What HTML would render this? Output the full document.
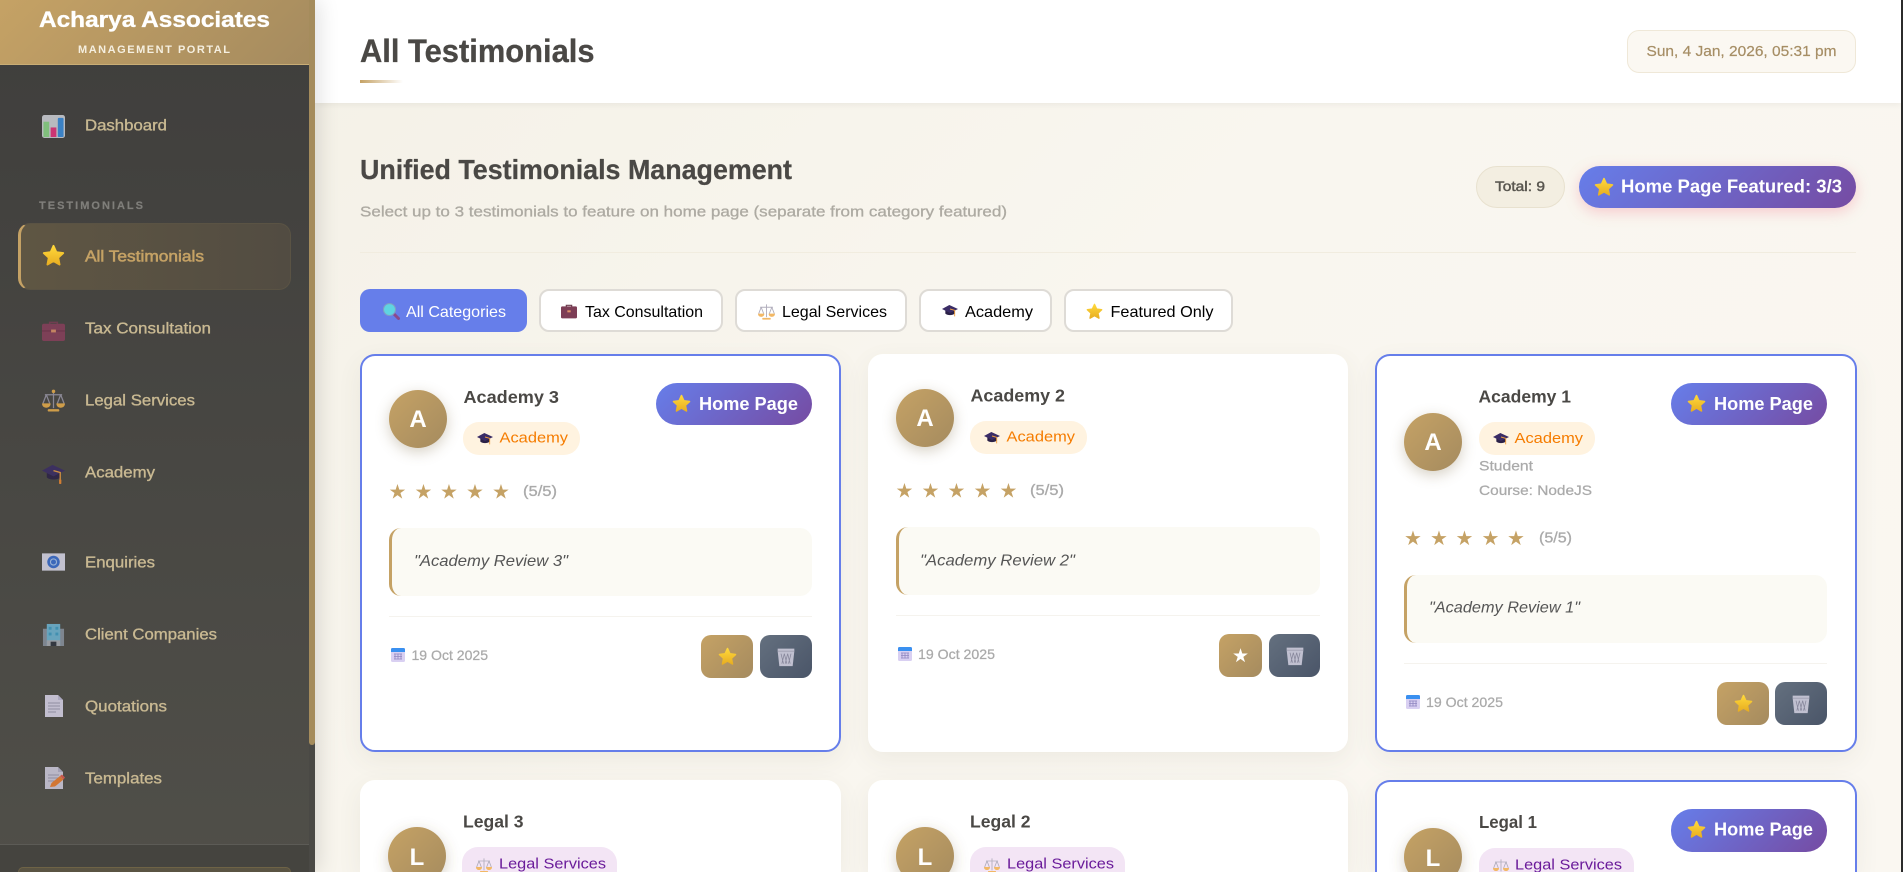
<!DOCTYPE html>
<html lang="en">
<head>
<meta charset="utf-8">
<title>All Testimonials</title>
<style>
html,body{margin:0;padding:0;width:1903px;height:872px;overflow:hidden;background:#f7f4ec;font-family:"Liberation Sans",sans-serif}
#root{position:relative;left:0;top:0;width:1903px;height:872px;overflow:hidden}
#root div{position:absolute;box-sizing:border-box}
#main{left:315px;top:0;width:1586px;height:872px;background:linear-gradient(135deg,#f4f1e7,#f9f6ef 45%,#faf7f1)}
#edge{left:1901px;top:0;width:2px;height:872px;background:#2b2b2b}
#aside{left:0;top:0;width:315px;height:872px;background:linear-gradient(180deg,#3f3e3c,#504f49);box-shadow:4px 0 20px rgba(0,0,0,.12)}
#track{left:309px;top:745px;width:6px;height:127px;background:#4a4945}
#thumb{left:309px;top:0;width:6px;height:745px;background:#a58c5c;border-radius:0 0 3px 3px}
#brand{left:0;top:0;width:309px;height:65px;background:linear-gradient(135deg,#c5a265,#a58b5f);border-bottom:1px solid #c9ad75}
#active{left:18px;top:223px;width:273px;height:67px;border-radius:12px;background:linear-gradient(90deg,#5f5643,#524c42);border:1px solid #5a5344;border-left:3px solid #c5a265}
#foot{left:0;top:844px;width:309px;height:28px;background:#45443f;border-top:1px solid #5c5b56}
#footbox{left:18px;top:867px;width:273px;height:5px;background:#5a5443;border:1px solid #6e6346;border-bottom:0;border-radius:12px 12px 0 0}
#top{left:315px;top:0;width:1586px;height:103px;background:#fff;box-shadow:0 2px 6px rgba(0,0,0,.05)}
#ul{left:360px;top:80px;width:43px;height:3px;background:linear-gradient(90deg,#c5a265,rgba(197,162,101,0))}
#date{left:1627px;top:30px;width:229px;height:43px;background:#fbf8f2;border:1px solid #efe8d8;border-radius:12px}
#rule{left:360px;top:252px;width:1496px;height:1px;background:#f1ecdf}
#total{left:1476px;top:166px;width:89px;height:42px;background:#f3eee1;border:1px solid #e8e1cf;border-radius:21px}
#feat{left:1579px;top:166px;width:277px;height:42px;background:linear-gradient(135deg,#667eea,#764ba2);border-radius:21px;box-shadow:0 4px 14px rgba(240,120,140,.35)}
#root .tab{top:289px;height:43px;background:#fff;border:2px solid #dedbd6;border-radius:10px}
.card{background:#fff;border-radius:15px;box-shadow:0 8px 25px rgba(90,80,50,.07)}
.low{height:92px;border-radius:15px 15px 0 0}
#root .hp{border:2px solid #667eea}
#root .hp.low{border-bottom:0}
.av{width:58px;height:58px;border-radius:50%;background:linear-gradient(135deg,#c5a265,#a58b5f);box-shadow:0 4px 14px rgba(120,100,60,.3)}
.pa{height:33px;background:#fff3e0;border-radius:16px}
.pl{height:25px;background:#f3e5f5;border-radius:16px 16px 0 0}
.hb{width:156px;height:42px;border-radius:21px;background:linear-gradient(135deg,#667eea,#764ba2)}
.q{height:68px;width:423px;background:#fbfaf4;border-left:3px solid #c5a265;border-radius:12px}
.ln{height:1px;width:423px;background:#f5f3ee}
.bg{height:43px;border-radius:10px;background:linear-gradient(135deg,#c5a265,#a58b5f)}
.bs{height:43px;width:52px;border-radius:10px;background:linear-gradient(135deg,#64707f,#4a5568)}
#ov{position:absolute;left:0;top:0}
text{font-family:"Liberation Sans",sans-serif}
.b{font-weight:700}
.nav{font-size:15.8px;fill:#c9b992;stroke:#c9b992;stroke-width:.35px}
.nm{font-size:17.6px;font-weight:700;fill:#4a4845}
.ca{font-size:14.8px;fill:#f57c00}
.cl{font-size:14.8px;fill:#6a1b9a}
.hpt{font-size:18px;font-weight:700;fill:#fff}
.st{font-family:"DejaVu Sans",sans-serif;font-size:20px;fill:#c5a265}
.rt{font-size:14.4px;fill:#aaa;stroke:#aaa;stroke-width:.3px}
.qt{font-size:16px;font-style:italic;fill:#555}
.dt{font-size:13.6px;fill:#aaa;stroke:#aaa;stroke-width:.25px}
.let{font-size:24px;font-weight:700;fill:#fff;text-anchor:middle}
.tb{font-size:16px;fill:#000}
.dim{opacity:.82}
</style>
</head>
<body>
<div id="root">
<div id="main"></div>
<div id="top"></div>
<div id="ul"></div>
<div id="date"></div>
<div id="rule"></div>
<div id="total"></div>
<div id="feat"></div>

<div class="tab" style="left:360px;width:167px;background:#667eea;border:0"></div>
<div class="tab" style="left:539px;width:184px"></div>
<div class="tab" style="left:735px;width:172px"></div>
<div class="tab" style="left:919px;width:133px"></div>
<div class="tab" style="left:1064px;width:169px"></div>

<!-- row 1 -->
<div class="card hp" style="left:360px;top:354px;width:481px;height:398px"></div>
<div class="av" style="left:389px;top:390px"></div>
<div class="pa" style="left:463px;top:422px;width:117px"></div>
<div class="hb" style="left:656px;top:383px"></div>
<div class="q" style="left:389px;top:528px"></div>
<div class="ln" style="left:389px;top:616px"></div>
<div class="bg" style="left:701px;top:635px;width:52px"></div>
<div class="bs" style="left:760px;top:635px"></div>

<div class="card" style="left:868px;top:354px;width:480px;height:398px"></div>
<div class="av" style="left:896px;top:389px"></div>
<div class="pa" style="left:970px;top:421px;width:117px"></div>
<div class="q" style="left:896px;top:527px;width:424px"></div>
<div class="ln" style="left:896px;top:615px;width:424px"></div>
<div class="bg" style="left:1219px;top:634px;width:43px"></div>
<div class="bs" style="left:1269px;top:634px;width:51px"></div>

<div class="card hp" style="left:1375px;top:354px;width:482px;height:398px"></div>
<div class="av" style="left:1404px;top:413px"></div>
<div class="pa" style="left:1479px;top:422px;width:116px"></div>
<div class="hb" style="left:1671px;top:383px"></div>
<div class="q" style="left:1404px;top:575px"></div>
<div class="ln" style="left:1404px;top:663px"></div>
<div class="bg" style="left:1717px;top:682px;width:52px"></div>
<div class="bs" style="left:1775px;top:682px"></div>

<!-- row 2 (cut off by the viewport) -->
<div class="card low" style="left:360px;top:780px;width:481px"></div>
<div class="pl" style="left:462px;top:847px;width:155px"></div>

<div class="card low" style="left:868px;top:780px;width:480px"></div>
<div class="pl" style="left:970px;top:847px;width:155px"></div>

<div class="card hp low" style="left:1375px;top:780px;width:482px"></div>
<div class="pl" style="left:1479px;top:848px;width:155px;height:24px"></div>
<div class="hb" style="left:1671px;top:809px;height:43px"></div>

<div id="aside"></div>
<div id="thumb"></div>
<div id="track"></div>
<div id="brand"></div>
<div id="active"></div>
<div id="foot"></div>
<div id="footbox"></div>
<div id="edge"></div>

<svg id="ov" width="1903" height="872" viewBox="0 0 1903 872" xmlns="http://www.w3.org/2000/svg">
<defs>
<linearGradient id="sg" x1="0" y1="0" x2="0" y2="1"><stop offset="0" stop-color="#ffd83a"/><stop offset="1" stop-color="#e8ae22"/></linearGradient>
<linearGradient id="ag" x1="0" y1="0" x2="1" y2="1"><stop offset="0" stop-color="#c5a265"/><stop offset="1" stop-color="#a58b5f"/></linearGradient>
<filter id="as" x="-40%" y="-40%" width="180%" height="180%"><feDropShadow dx="0" dy="4" stdDeviation="7" flood-color="#78643c" flood-opacity=".3"/></filter>
</defs>

<!-- brand -->
<text x="39" y="27" class="b" font-size="22.500" fill="#fff" stroke="#fff" stroke-width=".35" textLength="231" lengthAdjust="spacingAndGlyphs">Acharya Associates</text>
<text x="78" y="53" class="b" font-size="11" fill="#f5efe0" textLength="152" lengthAdjust="spacing">MANAGEMENT PORTAL</text>

<!-- nav -->
<text x="85" y="130.500" class="nav" textLength="82" lengthAdjust="spacingAndGlyphs">Dashboard</text>
<text x="39" y="209" class="b" font-size="11" fill="#7f7e7a" stroke="#7f7e7a" stroke-width=".2" textLength="104" lengthAdjust="spacing">TESTIMONIALS</text>
<text x="85" y="261.500" font-size="15.800" fill="#c5a265" stroke="#c5a265" stroke-width=".55" textLength="119" lengthAdjust="spacingAndGlyphs">All Testimonials</text>
<text x="85" y="333.500" class="nav" textLength="126" lengthAdjust="spacingAndGlyphs">Tax Consultation</text>
<text x="85" y="405.500" class="nav" textLength="110" lengthAdjust="spacingAndGlyphs">Legal Services</text>
<text x="85" y="477.500" class="nav" textLength="70" lengthAdjust="spacingAndGlyphs">Academy</text>
<text x="85" y="567.500" class="nav" textLength="70" lengthAdjust="spacingAndGlyphs">Enquiries</text>
<text x="85" y="639.500" class="nav" textLength="132" lengthAdjust="spacingAndGlyphs">Client Companies</text>
<text x="85" y="711.500" class="nav" textLength="82" lengthAdjust="spacingAndGlyphs">Quotations</text>
<text x="85" y="783.500" class="nav" textLength="77" lengthAdjust="spacingAndGlyphs">Templates</text>

<!-- nav icons -->
<svg x="42" y="115" width="23" height="23" viewBox="0 0 24 24" class="dim"><rect width="24" height="24" rx="2.500" fill="#d3d5dc"/><rect x="1.500" y="7" width="6" height="16" fill="#8fdb8a"/><rect x="9" y="13" width="6" height="10" fill="#ea337f"/><rect x="16.500" y="3" width="6" height="20" rx="1" fill="#3a90e2"/></svg>
<svg x="42" y="244" width="23" height="23" viewBox="0 0 24 24"><path fill="url(#sg)" stroke="url(#sg)" stroke-width="2" stroke-linejoin="round" d="M12 2l3 6.600 7.100.9-5.200 4.800 1.400 7.100L12 17.800l-6.300 3.600 1.400-7.100L1.900 9.500 9 8.600z"/></svg>
<svg x="42" y="319" width="23" height="23" viewBox="0 0 24 24" class="dim"><path d="M8 6V3.500h8V6" fill="none" stroke="#7a3d55" stroke-width="1.600"/><rect y="5" width="24" height="18" rx="2" fill="#8a3f5c"/><rect y="12" width="24" height="1" fill="#6f3049"/><rect x="9.500" y="11" width="5" height="3" fill="#e0936a"/></svg>
<svg x="42" y="389" width="23" height="23" viewBox="0 0 24 24" class="dim"><path d="M12 2v18M3 6h18M4.500 6L1 15M4.500 6L8 15M19.500 6L16 15M19.500 6L23 15" fill="none" stroke="#9a97a8" stroke-width="1.300"/><path d="M0 15h9c0 3-2 4.500-4.500 4.500S0 18 0 15zM15 15h9c0 3-2 4.500-4.500 4.500S15 18 15 15z" fill="#eeb14b"/><rect x="6" y="21" width="12" height="2.500" rx="1" fill="#eeb14b"/><circle cx="12" cy="2.500" r="1.800" fill="#eeb14b"/></svg>
<svg x="42" y="462" width="23" height="23" viewBox="0 0 24 24" class="dim"><path d="M5 11v5c3 3 11 3 14 0v-5z" fill="#2b2147"/><path d="M11 3L24 9 12 15 0 9z" fill="#3a2c66"/><path d="M12 9l7 2v9" fill="none" stroke="#f0a040" stroke-width="1.400"/><rect x="17.800" y="18" width="2.400" height="5" rx="1" fill="#f08a30"/></svg>
<svg x="42" y="553" width="23" height="18" viewBox="0 0 24 18" class="dim"><rect width="24" height="18" fill="#dddcee"/><circle cx="12" cy="9" r="6.500" fill="#3a6fd4"/><circle cx="12" cy="9" r="3.200" fill="none" stroke="#a8c6f4" stroke-width="1.200"/></svg>
<svg x="42" y="623" width="23" height="23" viewBox="0 0 24 24" class="dim"><rect x="1" y="6" width="22" height="18" fill="#8a92a0"/><rect x="5" y="1" width="14" height="23" fill="#6fb8d8"/><g fill="#3fa0c8"><rect x="7" y="4" width="3" height="3"/><rect x="14" y="4" width="3" height="3"/><rect x="7" y="10" width="3" height="3"/><rect x="14" y="10" width="3" height="3"/></g><rect x="5" y="18" width="14" height="6" fill="#a9adb6"/><rect x="9" y="19.500" width="6" height="4.500" fill="#2f3540"/></svg>
<svg x="45" y="695" width="18" height="22" viewBox="0 0 18 22" class="dim"><path d="M0 0h13l5 5v17H0z" fill="#dcd8ee"/><path d="M13 0v5h5z" fill="#c2bedb"/><path d="M3 8h12M3 11h12M3 14h12M3 17h8" stroke="#9f9cb4" stroke-width="1"/></svg>
<svg x="45" y="767" width="20" height="22" viewBox="0 0 20 22" class="dim"><path d="M0 0h13l5 5v17H0z" fill="#d2cfe2"/><path d="M13 0v5h5z" fill="#b5b1cc"/><path d="M3 8h11M3 11h11M3 14h8" stroke="#9f9cb4"/><path d="M5 20l1.500-4L15 9l3.500 3.500L10 19.500z" fill="#f08030"/><path d="M15 9l2-1.500 3 3-1.500 2z" fill="#e05a50"/></svg>

<!-- header -->
<text x="360" y="62" class="b" font-size="32" fill="#4a4845" stroke="#4a4845" stroke-width=".3" textLength="234.500" lengthAdjust="spacingAndGlyphs">All Testimonials</text>
<text x="1646.500" y="56" font-size="14.500" fill="#a68e65" stroke="#a68e65" stroke-width=".2" textLength="190" lengthAdjust="spacingAndGlyphs">Sun, 4 Jan, 2026, 05:31 pm</text>

<!-- section -->
<text x="360" y="179" class="b" font-size="27.500" fill="#4a4845" stroke="#4a4845" stroke-width=".25" textLength="432" lengthAdjust="spacingAndGlyphs">Unified Testimonials Management</text>
<text x="360" y="216.500" font-size="15.200" fill="#adaaa2" stroke="#adaaa2" stroke-width=".3" textLength="647" lengthAdjust="spacingAndGlyphs">Select up to 3 testimonials to feature on home page (separate from category featured)</text>
<text x="1495" y="191" font-size="13.600" fill="#5a5750" stroke="#5a5750" stroke-width=".45" textLength="50" lengthAdjust="spacingAndGlyphs">Total: 9</text>
<svg x="1594" y="177" width="20" height="20" viewBox="0 0 24 24"><path fill="url(#sg)" stroke="url(#sg)" stroke-width="2" stroke-linejoin="round" d="M12 2l3 6.600 7.100.9-5.200 4.800 1.400 7.100L12 17.800l-6.300 3.600 1.400-7.100L1.900 9.500 9 8.600z"/></svg>
<text x="1621" y="192.700" class="hpt" textLength="221" lengthAdjust="spacingAndGlyphs">Home Page Featured: 3/3</text>

<!-- tabs -->
<svg x="382" y="302" width="18" height="18" viewBox="0 0 24 24"><path d="M15 15l7 7" stroke="#8a4a8c" stroke-width="4" stroke-linecap="round"/><circle cx="10" cy="10" r="8" fill="#5fd4e2" stroke="#7f9fc4" stroke-width="1.500"/></svg>
<text x="406" y="317" class="tb" style="fill:#fff" textLength="100" lengthAdjust="spacingAndGlyphs">All Categories</text>
<svg x="561" y="303" width="16" height="16" viewBox="0 0 24 24"><path d="M8 6V3.500h8V6" fill="none" stroke="#6a3a4c" stroke-width="1.800"/><rect y="5" width="24" height="18" rx="2" fill="#7d3e56"/><rect x="9.500" y="11" width="5" height="3" fill="#e0936a"/></svg>
<text x="585" y="317" class="tb" textLength="118" lengthAdjust="spacingAndGlyphs">Tax Consultation</text>
<svg x="758" y="303" width="17" height="17" viewBox="0 0 24 24"><path d="M12 2v18M3 6h18M4.500 6L1 15M4.500 6L8 15M19.500 6L16 15M19.500 6L23 15" fill="none" stroke="#b0adbc" stroke-width="1.300"/><path d="M0 15h9c0 3-2 4.500-4.500 4.500S0 18 0 15zM15 15h9c0 3-2 4.500-4.500 4.500S15 18 15 15z" fill="#f2b866"/><rect x="6" y="21" width="12" height="2.500" rx="1" fill="#f2b866"/></svg>
<text x="782" y="317" class="tb" textLength="105" lengthAdjust="spacingAndGlyphs">Legal Services</text>
<svg x="942" y="303" width="16" height="16" viewBox="0 0 24 24"><path d="M5 11v5c3 3 11 3 14 0v-5z" fill="#2b2147"/><path d="M11 3L24 9 12 15 0 9z" fill="#3a2c66"/><path d="M12 9l7 2v9" fill="none" stroke="#f0a040" stroke-width="1.400"/></svg>
<text x="965" y="317" class="tb" textLength="68" lengthAdjust="spacingAndGlyphs">Academy</text>
<svg x="1086" y="303" width="17" height="17" viewBox="0 0 24 24"><path fill="url(#sg)" stroke="url(#sg)" stroke-width="2" stroke-linejoin="round" d="M12 2l3 6.600 7.100.9-5.200 4.800 1.400 7.100L12 17.800l-6.300 3.600 1.400-7.100L1.900 9.500 9 8.600z"/></svg>
<text x="1110.500" y="317" class="tb" textLength="103" lengthAdjust="spacingAndGlyphs">Featured Only</text>

<!-- card 1 -->
<text x="418" y="427" class="let">A</text>
<text x="463.500" y="403" class="nm" textLength="95.500" lengthAdjust="spacingAndGlyphs">Academy 3</text>
<svg x="477" y="431" width="16" height="16" viewBox="0 0 24 24"><path d="M5 11v5c3 3 11 3 14 0v-5z" fill="#2b2147"/><path d="M11 3L24 9 12 15 0 9z" fill="#3a2c66"/><path d="M12 9l7 2v9" fill="none" stroke="#f0a040" stroke-width="1.400"/></svg>
<text x="499.500" y="442.500" class="ca" textLength="68.500" lengthAdjust="spacingAndGlyphs">Academy</text>
<svg x="672" y="394" width="19" height="19" viewBox="0 0 24 24"><path fill="url(#sg)" stroke="url(#sg)" stroke-width="2" stroke-linejoin="round" d="M12 2l3 6.600 7.100.9-5.200 4.800 1.400 7.100L12 17.800l-6.300 3.600 1.400-7.100L1.900 9.500 9 8.600z"/></svg>
<text x="699" y="410" class="hpt" textLength="99" lengthAdjust="spacingAndGlyphs">Home Page</text>
<text x="388.500" y="498.500" class="st">★</text><text x="414.500" y="498.500" class="st">★</text><text x="440" y="498.500" class="st">★</text><text x="466" y="498.500" class="st">★</text><text x="492" y="498.500" class="st">★</text>
<text x="523" y="496" class="rt" textLength="34" lengthAdjust="spacingAndGlyphs">(5/5)</text>
<text x="414" y="566" class="qt" textLength="154" lengthAdjust="spacingAndGlyphs">"Academy Review 3"</text>
<svg x="391" y="648" width="14" height="14" viewBox="0 0 14 14"><rect width="14" height="14" rx="1.500" fill="#d9d0f2"/><path d="M0 1.500A1.500 1.500 0 0 1 1.500 0h11A1.500 1.500 0 0 1 14 1.500V4H0z" fill="#3a90f0"/><path d="M3 6h8M3 8.500h8M3 11h8M4 5.500v6M7 5.500v6M10 5.500v6" stroke="#8f86c0" stroke-width=".8"/></svg>
<text x="411.500" y="660" class="dt" textLength="76.500" lengthAdjust="spacingAndGlyphs">19 Oct 2025</text>
<svg x="718" y="647" width="19" height="19" viewBox="0 0 24 24"><path fill="url(#sg)" stroke="url(#sg)" stroke-width="2" stroke-linejoin="round" d="M12 2l3 6.600 7.100.9-5.200 4.800 1.400 7.100L12 17.800l-6.300 3.600 1.400-7.100L1.900 9.500 9 8.600z"/></svg>
<svg x="776" y="647" width="20" height="20" viewBox="0 0 24 24"><path d="M2 2h20v3l-2 18H4L2 5z" fill="#c0c0d0"/><path d="M2 5h20" stroke="#9e9eb0"/><path d="M6 8l3 12M10 8l3 12M14 8l3 12M18 8l-3 12M14 8l-3 12M10 8l-3 12" stroke="#85859a" stroke-width=".9"/></svg>

<!-- card 2 -->
<text x="925" y="426" class="let">A</text>
<text x="970.500" y="401.500" class="nm" textLength="94.500" lengthAdjust="spacingAndGlyphs">Academy 2</text>
<svg x="984" y="430" width="16" height="16" viewBox="0 0 24 24"><path d="M5 11v5c3 3 11 3 14 0v-5z" fill="#2b2147"/><path d="M11 3L24 9 12 15 0 9z" fill="#3a2c66"/><path d="M12 9l7 2v9" fill="none" stroke="#f0a040" stroke-width="1.400"/></svg>
<text x="1006.500" y="441.500" class="ca" textLength="68.500" lengthAdjust="spacingAndGlyphs">Academy</text>
<text x="895.500" y="497.500" class="st">★</text><text x="921.500" y="497.500" class="st">★</text><text x="947.500" y="497.500" class="st">★</text><text x="973.500" y="497.500" class="st">★</text><text x="999.500" y="497.500" class="st">★</text>
<text x="1030" y="495" class="rt" textLength="34" lengthAdjust="spacingAndGlyphs">(5/5)</text>
<text x="920" y="565.500" class="qt" textLength="155" lengthAdjust="spacingAndGlyphs">"Academy Review 2"</text>
<svg x="898" y="647" width="14" height="14" viewBox="0 0 14 14"><rect width="14" height="14" rx="1.500" fill="#d9d0f2"/><path d="M0 1.500A1.500 1.500 0 0 1 1.500 0h11A1.500 1.500 0 0 1 14 1.500V4H0z" fill="#3a90f0"/><path d="M3 6h8M3 8.500h8M3 11h8M4 5.500v6M7 5.500v6M10 5.500v6" stroke="#8f86c0" stroke-width=".8"/></svg>
<text x="918" y="659" class="dt" textLength="77" lengthAdjust="spacingAndGlyphs">19 Oct 2025</text>
<text x="1240.500" y="662" font-size="19" fill="#fff" text-anchor="middle" style="font-family:'DejaVu Sans',sans-serif">★</text>
<svg x="1285" y="646" width="20" height="20" viewBox="0 0 24 24"><path d="M2 2h20v3l-2 18H4L2 5z" fill="#c0c0d0"/><path d="M2 5h20" stroke="#9e9eb0"/><path d="M6 8l3 12M10 8l3 12M14 8l3 12M18 8l-3 12M14 8l-3 12M10 8l-3 12" stroke="#85859a" stroke-width=".9"/></svg>

<!-- card 3 -->
<text x="1433" y="450" class="let">A</text>
<text x="1478.500" y="402.500" class="nm" textLength="92.500" lengthAdjust="spacingAndGlyphs">Academy 1</text>
<svg x="1493" y="431" width="16" height="16" viewBox="0 0 24 24"><path d="M5 11v5c3 3 11 3 14 0v-5z" fill="#2b2147"/><path d="M11 3L24 9 12 15 0 9z" fill="#3a2c66"/><path d="M12 9l7 2v9" fill="none" stroke="#f0a040" stroke-width="1.400"/></svg>
<text x="1514.500" y="443" class="ca" textLength="68.500" lengthAdjust="spacingAndGlyphs">Academy</text>
<text x="1479" y="470.500" font-size="14" fill="#aaa" stroke="#aaa" stroke-width=".25" textLength="54" lengthAdjust="spacingAndGlyphs">Student</text>
<text x="1479" y="495" font-size="14" fill="#aaa" stroke="#aaa" stroke-width=".25" textLength="113" lengthAdjust="spacingAndGlyphs">Course: NodeJS</text>
<svg x="1687" y="394" width="19" height="19" viewBox="0 0 24 24"><path fill="url(#sg)" stroke="url(#sg)" stroke-width="2" stroke-linejoin="round" d="M12 2l3 6.600 7.100.9-5.200 4.800 1.400 7.100L12 17.800l-6.300 3.600 1.400-7.100L1.900 9.500 9 8.600z"/></svg>
<text x="1714" y="410" class="hpt" textLength="99" lengthAdjust="spacingAndGlyphs">Home Page</text>
<text x="1404" y="545" class="st">★</text><text x="1430" y="545" class="st">★</text><text x="1455.500" y="545" class="st">★</text><text x="1481.500" y="545" class="st">★</text><text x="1507" y="545" class="st">★</text>
<text x="1539" y="542.500" class="rt" textLength="33" lengthAdjust="spacingAndGlyphs">(5/5)</text>
<text x="1429" y="612.500" class="qt" textLength="151" lengthAdjust="spacingAndGlyphs">"Academy Review 1"</text>
<svg x="1406" y="695" width="14" height="14" viewBox="0 0 14 14"><rect width="14" height="14" rx="1.500" fill="#d9d0f2"/><path d="M0 1.500A1.500 1.500 0 0 1 1.500 0h11A1.500 1.500 0 0 1 14 1.500V4H0z" fill="#3a90f0"/><path d="M3 6h8M3 8.500h8M3 11h8M4 5.500v6M7 5.500v6M10 5.500v6" stroke="#8f86c0" stroke-width=".8"/></svg>
<text x="1426" y="707" class="dt" textLength="77" lengthAdjust="spacingAndGlyphs">19 Oct 2025</text>
<svg x="1734" y="694" width="19" height="19" viewBox="0 0 24 24"><path fill="url(#sg)" stroke="url(#sg)" stroke-width="2" stroke-linejoin="round" d="M12 2l3 6.600 7.100.9-5.200 4.800 1.400 7.100L12 17.800l-6.300 3.600 1.400-7.100L1.900 9.500 9 8.600z"/></svg>
<svg x="1791" y="694" width="20" height="20" viewBox="0 0 24 24"><path d="M2 2h20v3l-2 18H4L2 5z" fill="#c0c0d0"/><path d="M2 5h20" stroke="#9e9eb0"/><path d="M6 8l3 12M10 8l3 12M14 8l3 12M18 8l-3 12M14 8l-3 12M10 8l-3 12" stroke="#85859a" stroke-width=".9"/></svg>

<!-- row 2 text -->
<circle cx="417" cy="856" r="29" fill="url(#ag)" filter="url(#as)"/>
<text x="417" y="865" class="let">L</text>
<text x="463" y="827.500" class="nm" textLength="60.500" lengthAdjust="spacingAndGlyphs">Legal 3</text>
<svg x="476" y="857" width="16" height="15" viewBox="0 0 24 22.500"><path d="M12 2v18M3 6h18M4.500 6L1 15M4.500 6L8 15M19.500 6L16 15M19.500 6L23 15" fill="none" stroke="#b0adbc" stroke-width="1.300"/><path d="M0 15h9c0 3-2 4.500-4.500 4.500S0 18 0 15zM15 15h9c0 3-2 4.500-4.500 4.500S15 18 15 15z" fill="#f2b866"/><rect x="6" y="21" width="12" height="2.500" rx="1" fill="#f2b866"/></svg>
<text x="499" y="868.500" class="cl" textLength="107" lengthAdjust="spacingAndGlyphs">Legal Services</text>

<circle cx="925" cy="856" r="29" fill="url(#ag)" filter="url(#as)"/>
<text x="925" y="865" class="let">L</text>
<text x="970" y="827.500" class="nm" textLength="60.500" lengthAdjust="spacingAndGlyphs">Legal 2</text>
<svg x="984" y="857" width="16" height="15" viewBox="0 0 24 22.500"><path d="M12 2v18M3 6h18M4.500 6L1 15M4.500 6L8 15M19.500 6L16 15M19.500 6L23 15" fill="none" stroke="#b0adbc" stroke-width="1.300"/><path d="M0 15h9c0 3-2 4.500-4.500 4.500S0 18 0 15zM15 15h9c0 3-2 4.500-4.500 4.500S15 18 15 15z" fill="#f2b866"/><rect x="6" y="21" width="12" height="2.500" rx="1" fill="#f2b866"/></svg>
<text x="1007" y="868.500" class="cl" textLength="107" lengthAdjust="spacingAndGlyphs">Legal Services</text>

<circle cx="1433" cy="857" r="29" fill="url(#ag)" filter="url(#as)"/>
<text x="1433" y="866" class="let">L</text>
<text x="1479" y="828" class="nm" textLength="58" lengthAdjust="spacingAndGlyphs">Legal 1</text>
<svg x="1493" y="858" width="16" height="14" viewBox="0 0 24 21"><path d="M12 2v18M3 6h18M4.500 6L1 15M4.500 6L8 15M19.500 6L16 15M19.500 6L23 15" fill="none" stroke="#b0adbc" stroke-width="1.300"/><path d="M0 15h9c0 3-2 4.500-4.500 4.500S0 18 0 15zM15 15h9c0 3-2 4.500-4.500 4.500S15 18 15 15z" fill="#f2b866"/></svg>
<text x="1515" y="869.500" class="cl" textLength="107" lengthAdjust="spacingAndGlyphs">Legal Services</text>
<svg x="1687" y="820" width="19" height="19" viewBox="0 0 24 24"><path fill="url(#sg)" stroke="url(#sg)" stroke-width="2" stroke-linejoin="round" d="M12 2l3 6.600 7.100.9-5.200 4.800 1.400 7.100L12 17.800l-6.300 3.600 1.400-7.100L1.900 9.500 9 8.600z"/></svg>
<text x="1714" y="835.500" class="hpt" textLength="99" lengthAdjust="spacingAndGlyphs">Home Page</text>
</svg>
</div>
</body>
</html>
